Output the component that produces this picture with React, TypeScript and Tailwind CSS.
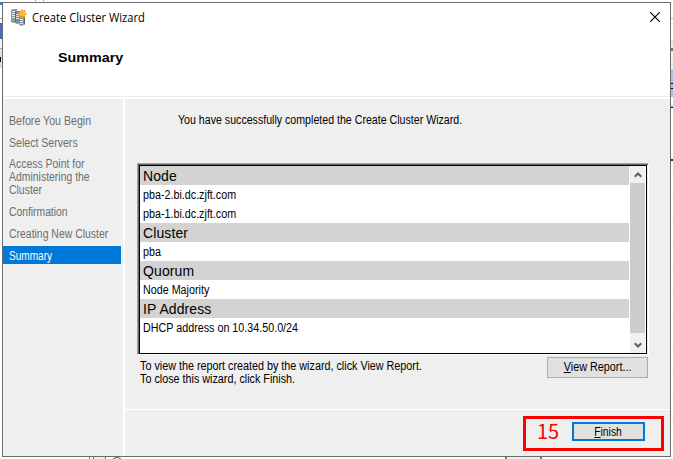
import React from "react";

const steps = [
  { lines: ["Before You Begin"], cls: "h-[22px]", scale: "scale-x-[0.885]" },
  { lines: ["Select Servers"], cls: "h-[21px]", scale: "scale-x-[0.88]" },
  { lines: ["Access Point for", "Administering the", "Cluster"], cls: "h-[48px]", scale: "scale-x-[0.87]" },
  { lines: ["Confirmation"], cls: "h-[22px]", scale: "scale-x-[0.86]" },
  { lines: ["Creating New Cluster"], cls: "h-[22px]", scale: "scale-x-[0.87]" },
];

const report = [
  { head: true, text: "Node" },
  { head: false, text: "pba-2.bi.dc.zjft.com" },
  { head: false, text: "pba-1.bi.dc.zjft.com" },
  { head: true, text: "Cluster" },
  { head: false, text: "pba" },
  { head: true, text: "Quorum" },
  { head: false, text: "Node Majority" },
  { head: true, text: "IP Address" },
  { head: false, text: "DHCP address on 10.34.50.0/24" },
];

function ClusterIcon() {
  return (
    <svg width="16" height="17" viewBox="0 0 16 17" className="block shrink-0">
      <path d="M0 1l2-1h4v13l-4 1-2-1z" fill="#8b98a3" />
      <path d="M4 2h5v12l-3 1-2-1z" fill="#7c8b98" />
      <path d="M1 2h3v1H1zM1 4h3v1H1zM1 6h3v1H1zM1 8h3v1H1zM5 5h3v1H5zM5 7h3v1H5zM5 9h3v1H5z" fill="#e4ebef" />
      <path d="M4 3h1v10H4zM8 8h1v6H8z" fill="#5b6975" />
      <path d="M8 7h6v8l-3 2-3-1z" fill="#8796a2" />
      <path d="M9 10h3v1H9zM9 12h3v1H9zM9 14h3v1H9z" fill="#e0e8ec" />
      <path d="M13 8h1v7l-1 1z" fill="#53616d" />
      <path d="M1 11h2v1H1zM6 12h1v1H6zM12 13h1v1h-1z" fill="#63c63b" />
      <path d="M10.5 0l1.500 1.600L14.500.700l-.400 2.700L16 5l-2 1.300.200 2.700-2.400-1L10 9.700 9.200 7.500 6.600 7.600 8 5.300 6.700 3.200l2.500-.200z" fill="#f09a18" />
      <circle cx="11.5" cy="4.5" r="2.8" fill="#ffb83c" />
    </svg>
  );
}

function Chevron({ down = false }: { down?: boolean }) {
  return (
    <svg width="8" height="6" viewBox="0 0 8 6" className={down ? "rotate-180" : ""}>
      <path d="M.7 4.8 4 1.5l3.3 3.3" fill="none" stroke="#606060" strokeWidth="2" />
    </svg>
  );
}

function BackdropLeft() {
  return (
    <div className="flex w-[2px] flex-col overflow-hidden">
      <div className="h-[2px] bg-white" />
      <div className="h-[3px] bg-[#2585d5]" />
      <div className="h-[13px] bg-white" />
      <div className="h-[5px] border-t border-[#999] bg-white" />
      <div className="h-[16px] bg-[#4569d0]" />
      <div className="h-[10px] border-b border-[#aaa] bg-[#f3f3f3]" />
      <div className="h-[19px] bg-[#e0e0e0] pt-[8px]"><div className="h-[5px] w-px bg-black" /></div>
      <div className="flex-1 bg-white" />
    </div>
  );
}

function BackdropRight() {
  return (
    <div className="flex w-[2px] flex-col overflow-hidden">
      <div className="h-[18px] bg-white" />
      <div className="h-[24px] border-y border-[#bbb] bg-white" />
      <div className="h-[6px] bg-[#f0f0f0]" />
      <div className="h-[3px] bg-[#777]" />
      <div className="h-[20px] border-b border-[#aaa] bg-[#f0f0f0]" />
      <div className="h-[26px] bg-[#a9c3e5] pt-[12px]"><div className="h-[6px] border-y border-black" /></div>
      <div className="h-[8px] bg-white" />
      <div className="h-[3px] border-b border-black bg-[#9ce5ff]" />
      <div className="h-[51px] bg-white" />
      <div className="h-[2px] bg-[#611]" />
      <div className="flex-1 bg-[repeating-linear-gradient(#fff_0_8px,#eee_8px_9px,#fff_9px_25px)]" />
    </div>
  );
}

export default function App() {
  return (
    <div className="flex h-[459px] w-[673px] flex-col overflow-hidden bg-white font-['Liberation_Sans',Arial,sans-serif] text-[12px] leading-[13px] text-black">
      <div className="flex h-[2px] pl-[35px]"><div className="mr-[7px] h-px w-px bg-[#888]" /><div className="h-px w-px bg-[#888]" /></div>
      <div className="flex h-[455px]">
        <div className="-mt-[2px] flex"><BackdropLeft /></div>
        <div className="flex w-[669px] flex-col border border-[#6b6b6b] bg-white">
          <header className="h-[94px] border-b border-[#eee]">
            <div className="flex h-[31px] items-start">
              <div className="ml-[8px] mt-[6px]"><ClusterIcon /></div>
              <h1 className="ml-[5px] mt-[7px] origin-left scale-x-[0.93] whitespace-nowrap font-['Open_Sans','Noto_Sans',sans-serif] text-[12px] leading-[16px]">Create Cluster Wizard</h1>
              <svg className="ml-auto mr-[10px] mt-[9px]" width="10" height="10" viewBox="0 0 10 10"><path d="M0 0l10 10M10 0L0 10" stroke="#000" strokeWidth="1.1" /></svg>
            </div>
            <h2 className="ml-[55px] mt-[16px] w-max origin-left scale-x-[1.06] text-[13.5px] font-bold leading-[16px]">Summary</h2>
          </header>
          <div className="mt-[2px] flex h-[357px]">
            <nav className="w-[120px] bg-[#efefef] pt-[16px] text-[#6d6d6d]">
              {steps.map((s) => (
                <div key={s.lines[0]} className={`pl-[6px] ${s.cls}`}>
                  {s.lines.map((l) => (
                    <div key={l} className={`w-max origin-left whitespace-nowrap ${s.scale}`}>{l}</div>
                  ))}
                </div>
              ))}
              <div className="-mt-[4px] h-[18px] w-[118px] bg-[#0078d7] pl-[6px] pt-[4px] text-white"><div className="w-max origin-left scale-x-[0.84]">Summary</div></div>
            </nav>
            <main className="ml-[2px] flex w-[545px] flex-col bg-[#efefef]">
              <p className="ml-[53px] mt-[15px] h-[49px] w-max origin-left scale-x-[0.885] whitespace-nowrap">You have successfully completed the Create Cluster Wizard.</p>
              <div className="ml-[12px] h-[192px] w-[512px] border border-b-white border-l-[#a0a0a0] border-r-white border-t-[#a0a0a0]">
                <div className="h-[190px] border-l border-t border-[#696969]">
                  <div className="flex h-[189px] w-[508px] border border-black bg-white">
                    <div className="w-[489px]">
                      {report.map((r) =>
                        r.head ? (
                          <div key={r.text} className="h-[19px] bg-[#d3d3d3] pl-[3px] pt-[2px] text-[14px] leading-[16px] tracking-[0.1px]">{r.text}</div>
                        ) : (
                          <div key={r.text} className="h-[19px] pl-[2.5px] pt-[4px]"><div className="w-max origin-left scale-x-[0.895]">{r.text}</div></div>
                        )
                      )}
                    </div>
                    <div className="ml-px flex w-[15px] flex-col bg-[#f0f0f0]">
                      <div className="flex h-[17px] items-center justify-center pt-px"><Chevron /></div>
                      <div className="h-[150px] bg-[#cdcdcd]" />
                      <div className="flex flex-1 items-center justify-center pt-[3px]"><Chevron down /></div>
                    </div>
                  </div>
                </div>
              </div>
              <div className="flex h-[54px] justify-between pl-[15px] pr-[22px]">
                <p className="mt-[5px] h-[26px] w-[320px] origin-left scale-x-[0.898] whitespace-pre">{"To view the report created by the wizard, click View Report.\nTo close this wizard, click Finish."}</p>
                <button className="mt-[2px] flex h-[21px] w-[101px] items-center justify-center whitespace-nowrap border border-[#adadad] bg-[#e1e1e1]"><span className="block scale-x-[0.9]"><u>V</u>iew Report...</span></button>
              </div>
              <footer className="flex flex-1 justify-end border-t border-white pr-[6px] pt-[6px]">
                <div className="flex h-[35px] w-[141px] border-[3px] border-[#f00]">
                  <span className="ml-[11px] mt-[1px] w-[35px] font-['Noto_Sans_CJK_SC',sans-serif] text-[20px] leading-[22px] tracking-[-0.2px] text-[#f00]">15</span>
                  <button className="mt-[3px] flex h-[19px] w-[73px] items-center justify-center border-2 border-[#0078d7] bg-[#e1e1e1] pt-px"><span className="block scale-x-[0.86]"><u>F</u>inish</span></button>
                </div>
              </footer>
            </main>
          </div>
        </div>
        <div className="-mt-[2px] flex"><BackdropRight /></div>
      </div>
      <div className="flex h-[2px]">
        <div className="ml-[89px] w-[5px] border-x border-[#777]" />
        <div className="w-[12px] border-r border-[#777] bg-[#eee]" />
        <div className="ml-[5px] h-[6px] w-[12px] rounded-t-full border border-[#555]" />
        <div className="ml-[382px] w-[2px] bg-[#777]" />
        <div className="w-[33px] bg-[#eee]" />
        <div className="w-[2px] bg-[#777]" />
      </div>
    </div>
  );
}
